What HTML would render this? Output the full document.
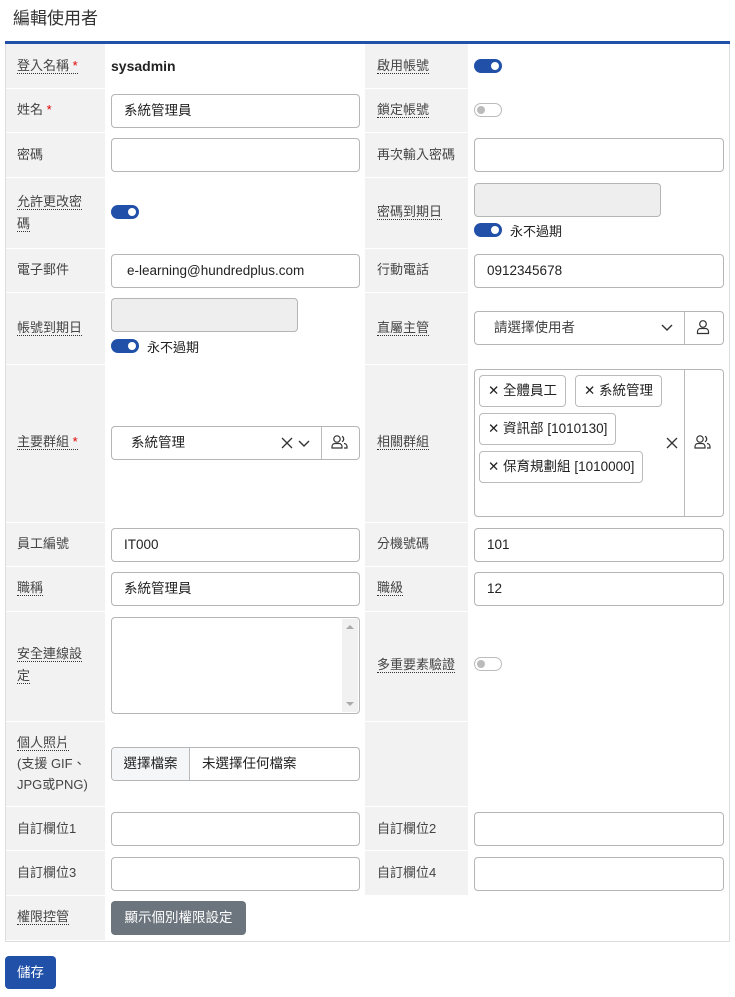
<!DOCTYPE html>
<html><head><meta charset="utf-8"><style>
*{box-sizing:border-box;margin:0;padding:0}
body{width:735px;height:997px;background:#fff;font-family:"Liberation Sans","Noto Sans CJK TC",sans-serif;font-size:13px;color:#222;position:relative;overflow:hidden}
.a{position:absolute}
.lb{position:absolute;background:#f2f2f2}
.l{position:absolute;color:#444;font-size:13px;line-height:22px}
.u{border-bottom:1px dotted #333}
.req{color:#d00}
.in{position:absolute;border:1px solid #b5b5b5;border-radius:4px;background:#fff;height:34px;padding-left:12px;line-height:32px;font-size:13.5px;color:#222}
.dis{background:#eee}
.tg{position:absolute;width:28px;height:14px;border-radius:7px;background:#2150a8}
.tg:after{content:"";position:absolute;right:3px;top:3px;width:8px;height:8px;border-radius:50%;background:#fff}
.tg.off{background:#fff;border:1px solid #bbb}
.tg.off:after{left:2px;right:auto;top:2px;background:#bbb}
.chip{position:absolute;border:1px solid #bbb;border-radius:4px;height:32px;line-height:30px;padding:0 8px 0 8px;font-size:13.5px;color:#222;white-space:nowrap}
</style></head><body>
<div class="a" style="left:13px;top:8px;font-size:17px;color:#333;line-height:22px">編輯使用者</div>
<div class="a" style="left:5px;top:41px;width:725px;height:3px;background:#2150a8"></div>
<div class="a" style="left:5px;top:44px;width:725px;height:898px;border:1px solid #ddd;border-top:none"></div>

<!-- label backgrounds -->
<div class="lb" style="left:6px;top:44px;width:99px;height:896px"></div>
<div class="lb" style="left:365px;top:44px;width:103px;height:852px"></div>
<div class="a" style="left:468px;top:896px;width:261px;height:44px;background:#fff"></div>
<!-- row separators -->
<div class="a" style="left:6px;top:88px;width:723px;height:1px;background:#fff"></div>
<div class="a" style="left:6px;top:132px;width:723px;height:1px;background:#fff"></div>
<div class="a" style="left:6px;top:177px;width:723px;height:1px;background:#fff"></div>
<div class="a" style="left:6px;top:248px;width:723px;height:1px;background:#fff"></div>
<div class="a" style="left:6px;top:292px;width:723px;height:1px;background:#fff"></div>
<div class="a" style="left:6px;top:364px;width:723px;height:1px;background:#fff"></div>
<div class="a" style="left:6px;top:522px;width:723px;height:1px;background:#fff"></div>
<div class="a" style="left:6px;top:566px;width:723px;height:1px;background:#fff"></div>
<div class="a" style="left:6px;top:611px;width:723px;height:1px;background:#fff"></div>
<div class="a" style="left:6px;top:721px;width:723px;height:1px;background:#fff"></div>
<div class="a" style="left:6px;top:806px;width:723px;height:1px;background:#fff"></div>
<div class="a" style="left:6px;top:850px;width:723px;height:1px;background:#fff"></div>
<div class="a" style="left:6px;top:895px;width:723px;height:1px;background:#fff"></div>

<!-- row 1 -->
<div class="l" style="left:17px;top:55px"><span class="u">登入名稱 <span class="req">*</span></span></div>
<div class="a" style="left:111px;top:58px;font-weight:bold;font-size:14px">sysadmin</div>
<div class="l" style="left:377px;top:55px"><span class="u">啟用帳號</span></div>
<div class="tg" style="left:474px;top:59px"></div>
<!-- row 2 -->
<div class="l" style="left:17px;top:99px">姓名 <span class="req">*</span></div>
<div class="in" style="left:111px;top:94px;width:249px">系統管理員</div>
<div class="l" style="left:377px;top:99px"><span class="u">鎖定帳號</span></div>
<div class="tg off" style="left:474px;top:103px"></div>
<!-- row 3 -->
<div class="l" style="left:17px;top:144px">密碼</div>
<div class="in" style="left:111px;top:138px;width:249px"></div>
<div class="l" style="left:377px;top:144px">再次輸入密碼</div>
<div class="in" style="left:474px;top:138px;width:250px"></div>
<!-- row 4 -->
<div class="l" style="left:17px;top:191px;width:80px"><span class="u">允許更改密</span><br><span class="u">碼</span></div>
<div class="tg" style="left:111px;top:205px"></div>
<div class="l" style="left:377px;top:201px"><span class="u">密碼到期日</span></div>
<div class="in dis" style="left:474px;top:183px;width:187px"></div>
<div class="tg" style="left:474px;top:223px"></div>
<div class="a" style="left:510px;top:221px;font-size:13px">永不過期</div>
<!-- row 5 -->
<div class="l" style="left:17px;top:259px">電子郵件</div>
<div class="in" style="left:111px;top:254px;width:249px;padding-left:15px">e-learning@hundredplus.com</div>
<div class="l" style="left:377px;top:259px">行動電話</div>
<div class="in" style="left:474px;top:254px;width:250px">0912345678</div>
<!-- row 6 -->
<div class="l" style="left:17px;top:317px"><span class="u">帳號到期日</span></div>
<div class="in dis" style="left:111px;top:298px;width:187px"></div>
<div class="tg" style="left:111px;top:339px"></div>
<div class="a" style="left:147px;top:337px;font-size:13px">永不過期</div>
<div class="l" style="left:377px;top:317px"><span class="u">直屬主管</span></div>
<div class="in" style="left:474px;top:311px;width:250px;padding-left:19px;color:#444">請選擇使用者</div>
<div class="a" style="left:684px;top:312px;width:1px;height:32px;background:#bbb"></div>
<svg class="a" style="left:661px;top:322px" width="12" height="10"><path d="M1 3l5 5 5-5" fill="none" stroke="#333" stroke-width="1.4"/></svg>
<svg class="a" style="left:696px;top:319px" width="14" height="16"><circle cx="7" cy="5" r="3.3" fill="none" stroke="#333" stroke-width="1.2"/><path d="M1.5 14.5v-2a3 3 0 0 1 3-3h5a3 3 0 0 1 3 3v2z" fill="none" stroke="#333" stroke-width="1.2"/></svg>
<!-- row 7 -->
<div class="l" style="left:17px;top:431px"><span class="u">主要群組 <span class="req">*</span></span></div>
<div class="in" style="left:111px;top:426px;width:249px;padding-left:19px">系統管理</div>
<div class="a" style="left:321px;top:427px;width:1px;height:32px;background:#bbb"></div>
<svg class="a" style="left:281px;top:437px" width="12" height="12"><path d="M1 1l10 10M11 1L1 11" stroke="#333" stroke-width="1.3"/></svg>
<svg class="a" style="left:298px;top:438px" width="12" height="10"><path d="M1 3l5 5 5-5" fill="none" stroke="#333" stroke-width="1.4"/></svg>
<svg class="a" style="left:331px;top:434px" width="18" height="16"><circle cx="6" cy="5" r="3.2" fill="none" stroke="#333" stroke-width="1.2"/><path d="M1 14v-1.5a3 3 0 0 1 3-3h4a3 3 0 0 1 3 3V14z" fill="none" stroke="#333" stroke-width="1.2"/><path d="M11 2.3a3 3 0 0 1 0 5.4M13 9.5a3 3 0 0 1 3 3V14h-3" fill="none" stroke="#333" stroke-width="1.2"/></svg>
<div class="l" style="left:377px;top:431px"><span class="u">相關群組</span></div>
<div class="in" style="left:474px;top:369px;width:250px;height:148px"></div>
<div class="a" style="left:684px;top:370px;width:1px;height:146px;background:#bbb"></div>
<div class="chip" style="left:479px;top:375px">✕ 全體員工</div>
<div class="chip" style="left:575px;top:375px">✕ 系統管理</div>
<div class="chip" style="left:479px;top:413px">✕ 資訊部 [1010130]</div>
<div class="chip" style="left:479px;top:451px">✕ 保育規劃組 [1010000]</div>
<svg class="a" style="left:666px;top:437px" width="12" height="12"><path d="M1 1l10 10M11 1L1 11" stroke="#333" stroke-width="1.3"/></svg>
<svg class="a" style="left:694px;top:434px" width="18" height="16"><circle cx="6" cy="5" r="3.2" fill="none" stroke="#333" stroke-width="1.2"/><path d="M1 14v-1.5a3 3 0 0 1 3-3h4a3 3 0 0 1 3 3V14z" fill="none" stroke="#333" stroke-width="1.2"/><path d="M11 2.3a3 3 0 0 1 0 5.4M13 9.5a3 3 0 0 1 3 3V14h-3" fill="none" stroke="#333" stroke-width="1.2"/></svg>
<!-- row 8 -->
<div class="l" style="left:17px;top:533px">員工編號</div>
<div class="in" style="left:111px;top:528px;width:249px">IT000</div>
<div class="l" style="left:377px;top:533px">分機號碼</div>
<div class="in" style="left:474px;top:528px;width:250px">101</div>
<!-- row 9 -->
<div class="l" style="left:17px;top:577px"><span class="u">職稱</span></div>
<div class="in" style="left:111px;top:572px;width:249px">系統管理員</div>
<div class="l" style="left:377px;top:577px"><span class="u">職級</span></div>
<div class="in" style="left:474px;top:572px;width:250px">12</div>
<!-- row 10 -->
<div class="l" style="left:17px;top:643px"><span class="u">安全連線設</span><br><span class="u">定</span></div>
<div class="in" style="left:111px;top:617px;width:249px;height:97px;padding:0"><div class="a" style="right:1px;top:1px;width:16px;height:93px;background:#f1f1f1"></div><div class="a" style="right:5px;top:7px;width:0;height:0;border:4px solid transparent;border-bottom-color:#aaa;border-top:none"></div><div class="a" style="right:5px;bottom:7px;width:0;height:0;border:4px solid transparent;border-top-color:#aaa;border-bottom:none"></div></div>
<div class="l" style="left:377px;top:654px"><span class="u">多重要素驗證</span></div>
<div class="tg off" style="left:474px;top:657px"></div>
<!-- row 11 -->
<div class="l" style="left:17px;top:732px;line-height:21px"><span class="u">個人照片</span><br>(支援 GIF、<br>JPG或PNG)</div>
<div class="in" style="left:111px;top:747px;width:249px;padding:0;overflow:hidden"><div class="a" style="left:0;top:0;width:78px;height:32px;background:#f5f6f7;border-right:1px solid #bbb;text-align:center;line-height:32px">選擇檔案</div><div class="a" style="left:90px;top:0">未選擇任何檔案</div></div>
<!-- row 12 -->
<div class="l" style="left:17px;top:818px">自訂欄位1</div>
<div class="in" style="left:111px;top:812px;width:249px"></div>
<div class="l" style="left:377px;top:818px">自訂欄位2</div>
<div class="in" style="left:474px;top:812px;width:250px"></div>
<!-- row 13 -->
<div class="l" style="left:17px;top:862px">自訂欄位3</div>
<div class="in" style="left:111px;top:857px;width:249px"></div>
<div class="l" style="left:377px;top:862px">自訂欄位4</div>
<div class="in" style="left:474px;top:857px;width:250px"></div>
<!-- row 14 -->
<div class="l" style="left:17px;top:906px"><span class="u">權限控管</span></div>
<div class="a" style="left:111px;top:901px;width:135px;height:34px;border-radius:4px;background:#6c757d;color:#fff;line-height:34px;text-align:center;font-size:13.5px">顯示個別權限設定</div>

<div class="a" style="left:5px;top:956px;width:51px;height:33px;border-radius:4px;background:#2150a8;color:#fff;line-height:33px;text-align:center;font-size:13.5px">儲存</div>
</body></html>
